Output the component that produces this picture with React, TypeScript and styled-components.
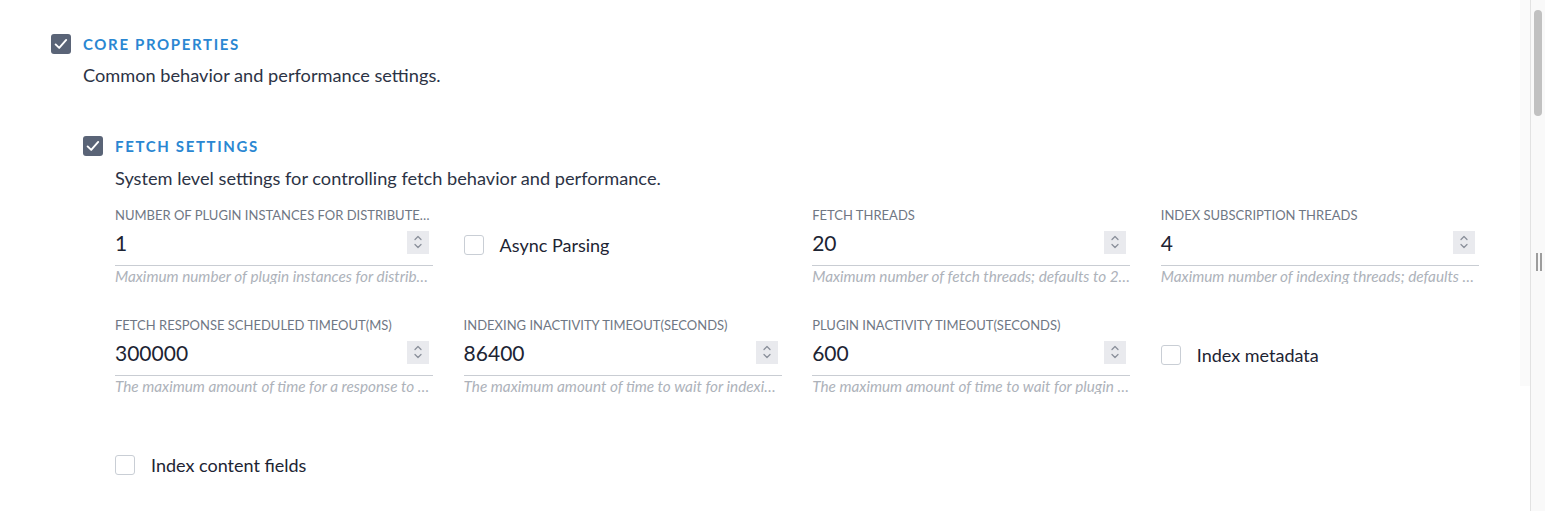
import React from "react";
import styled, { createGlobalStyle } from "styled-components";

const Global = createGlobalStyle`
  html, body { margin: 0; padding: 0; background: #fff; }
  body { font-family: Lato, "Noto Sans", "Liberation Sans", sans-serif; color: #2c3345; }
  * { box-sizing: border-box; }
`;

const Page = styled.div`
  display: flex;
  width: 1545px;
  height: 511px;
  overflow: hidden;
`;

const Main = styled.div`
  flex: 1;
  padding: 34px 0 0 51px;
`;

const Track = styled.div`
  width: 10px;
  height: 386px;
  background: #fafafa;
`;

const SidePanel = styled.div`
  position: relative;
  width: 15px;
  height: 511px;
  background: #f9f9f9;
  border-left: 1px solid #e2e2e2;
`;

const Thumb = styled.div`
  position: absolute;
  left: 3px;
  top: 10px;
  width: 8px;
  height: 106px;
  border-radius: 4px;
  background: #c1c1c1;
`;

const Grip = styled.div`
  position: absolute;
  left: 5px;
  top: 253px;
  width: 6px;
  height: 18px;
  border-left: 2px solid #9d9d9d;
  border-right: 2px solid #9d9d9d;
`;

const Header = styled.div`
  display: flex;
  align-items: center;
  gap: 12px;
  height: 20px;
`;

const Box = styled.span<{ $checked?: boolean }>`
  flex: none;
  display: inline-flex;
  align-items: center;
  justify-content: center;
  width: 20px;
  height: 20px;
  border-radius: 3px;
  background: ${(p) => (p.$checked ? "#5a6477" : "#fff")};
  border: ${(p) => (p.$checked ? "none" : "1px solid #c9ced5")};
`;

const Title = styled.span`
  font-size: 15px;
  font-weight: 700;
  letter-spacing: 1.65px;
  color: #2a87d2;
  text-transform: uppercase;
`;

const Description = styled.div<{ $top: number }>`
  margin: ${(p) => p.$top}px 0 0 32px;
  font-size: 18.2px;
  line-height: 22px;
  color: #2c3345;
`;

const Nested = styled.div`
  margin: 50px 0 0 32px;
`;

const Grid = styled.div`
  display: grid;
  grid-template-columns: repeat(4, 318px);
  column-gap: 30.6px;
  row-gap: 33px;
  margin: 18px 0 0 32px;
`;

const Field = styled.div`
  display: flex;
  flex-direction: column;
`;

const Label = styled.div`
  font-size: 13px;
  line-height: 16px;
  color: #6f7784;
  text-transform: uppercase;
  white-space: nowrap;
  overflow: hidden;
  text-overflow: ellipsis;
`;

const InputRow = styled.div`
  display: flex;
  align-items: center;
  justify-content: space-between;
  margin-top: 2px;
  height: 41px;
  padding: 0 4px 6px 0;
  border-bottom: 1px solid #c9cdd3;
`;

const Value = styled.span`
  font-size: 21px;
  color: #1d2433;
`;

const Spinner = styled.span`
  display: inline-flex;
  align-items: center;
  justify-content: center;
  width: 22px;
  height: 23px;
  background: #e9eaee;
`;

const Helper = styled.div`
  margin-top: 2px;
  font-size: 15.3px;
  line-height: 16px;
  font-style: italic;
  color: #adb2ba;
  white-space: nowrap;
  overflow: hidden;
  text-overflow: ellipsis;
`;

const CheckField = styled.label`
  display: flex;
  align-items: center;
  gap: 16px;
  padding-top: 28px;
  height: 48px;
  font-size: 18px;
  color: #1d2433;
`;

const Check = () => (
  <svg width="16" height="16" viewBox="0 0 16 16" fill="none">
    <path d="M2.6 8.4 L6.2 11.9 L13.2 3.9" stroke="#fff" strokeWidth="1.9" strokeLinecap="round" strokeLinejoin="round" />
  </svg>
);

const Arrows = () => (
  <svg width="12" height="18" viewBox="0 0 12 18" fill="none">
    <path d="M3 6.5 L6 3.5 L9 6.5" stroke="#8b919b" strokeWidth="1.3" strokeLinecap="round" strokeLinejoin="round" />
    <path d="M3 11.5 L6 14.5 L9 11.5" stroke="#8b919b" strokeWidth="1.3" strokeLinecap="round" strokeLinejoin="round" />
  </svg>
);

type Item =
  | { kind: "number"; label: string; value: string; help: string }
  | { kind: "check"; label: string };

const items: Item[] = [
  { kind: "number", label: "Number of plugin instances for distributed mode", value: "1", help: "Maximum number of plugin instances for distributed mode" },
  { kind: "check", label: "Async Parsing" },
  { kind: "number", label: "Fetch threads", value: "20", help: "Maximum number of fetch threads; defaults to 20 threads" },
  { kind: "number", label: "Index subscription threads", value: "4", help: "Maximum number of indexing threads; defaults to 4" },
  { kind: "number", label: "Fetch response scheduled timeout(ms)", value: "300000", help: "The maximum amount of time for a response to be scheduled" },
  { kind: "number", label: "Indexing inactivity timeout(seconds)", value: "86400", help: "The maximum amount of time to wait for indexing activity" },
  { kind: "number", label: "Plugin inactivity timeout(seconds)", value: "600", help: "The maximum amount of time to wait for plugin activity" },
  { kind: "check", label: "Index metadata" },
  { kind: "check", label: "Index content fields" },
];

export default function App() {
  return (
    <Page>
      <Global />
      <Main>
        <Header>
          <Box $checked>
            <Check />
          </Box>
          <Title>Core Properties</Title>
        </Header>
        <Description $top={10}>Common behavior and performance settings.</Description>
        <Nested>
          <Header>
            <Box $checked>
              <Check />
            </Box>
            <Title>Fetch Settings</Title>
          </Header>
          <Description $top={11}>System level settings for controlling fetch behavior and performance.</Description>
          <Grid>
            {items.map((it, i) =>
              it.kind === "number" ? (
                <Field key={i}>
                  <Label>{it.label}</Label>
                  <InputRow>
                    <Value>{it.value}</Value>
                    <Spinner>
                      <Arrows />
                    </Spinner>
                  </InputRow>
                  <Helper>{it.help}</Helper>
                </Field>
              ) : (
                <CheckField key={i}>
                  <Box />
                  {it.label}
                </CheckField>
              )
            )}
          </Grid>
        </Nested>
      </Main>
      <Track />
      <SidePanel>
        <Thumb />
        <Grip />
      </SidePanel>
    </Page>
  );
}
